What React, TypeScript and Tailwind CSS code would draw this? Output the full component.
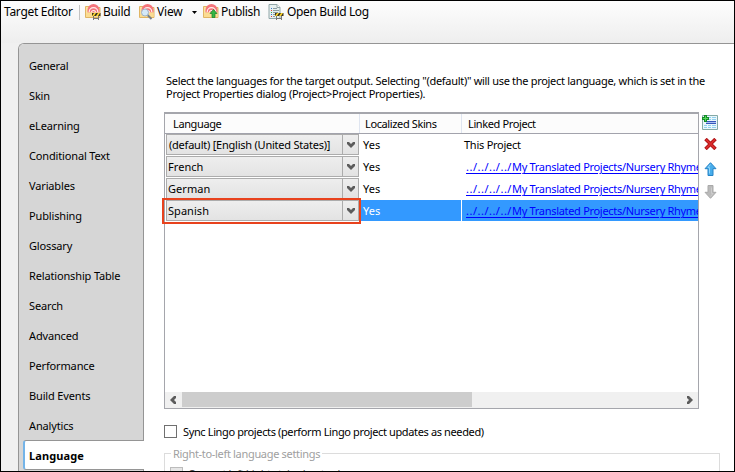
import React from "react";

const navItems = ["General", "Skin", "eLearning", "Conditional Text", "Variables", "Publishing", "Glossary", "Relationship Table", "Search", "Advanced", "Performance", "Build Events", "Analytics"];

const rows = [
  { language: "(default) [English (United States)]", link: false, selected: false },
  { language: "French", link: true, selected: false },
  { language: "German", link: true, selected: false },
  { language: "Spanish", link: true, selected: true },
];

function TargetArt() {
  return (
    <>
      <path d="M.5 2.500h4l1 1h9.500v10H.5z" fill="#fbe3a0" stroke="#e0b564" />
      <path d="M2.500 8.500V6a5.500 5.500 0 0 1 12 0v2.500z" fill="#f4757c" />
      <path d="M4.200 8a4.300 4.300 0 0 1 8.600 0M6.500 8.500a2 2 0 0 1 4 0" fill="none" stroke="#fff0ee" strokeWidth="1.200" />
      <path d="M1 9.500l3-1h10.500v4.500H1z" fill="#fbdc92" />
    </>
  );
}

function Barrier() {
  return (
    <>
      <path d="M8.500 12v4M13.500 12v4M8 14.500h6" stroke="#777" />
      <path d="M7 9h8.500v3H7z" fill="#3a3420" />
      <path d="M7 12l2-3h2l-2 3zM11 12l2-3h2l-2 3z" fill="#fbd42c" />
    </>
  );
}

function BuildIcon() {
  return <svg className="h-4 w-4 shrink-0" viewBox="0 0 16 16"><TargetArt /><Barrier /></svg>;
}

function ViewIcon() {
  return (
    <svg className="h-4 w-4 shrink-0" viewBox="0 0 16 16">
      <TargetArt />
      <path d="M8.500 11l4 4" stroke="#777f89" strokeWidth="2" />
      <circle cx="6" cy="8.500" r="3.500" fill="#d5e9f8" stroke="#9eb4c8" />
    </svg>
  );
}

function PublishIcon() {
  return (
    <svg className="h-4 w-4 shrink-0" viewBox="0 0 16 16">
      <TargetArt />
      <path d="M10.500 5.500L14 9.500h-2v4H9v-4H7z" fill="#35b744" stroke="#16812b" strokeWidth=".7" />
    </svg>
  );
}

function LogIcon() {
  return (
    <svg className="h-4 w-4 shrink-0" viewBox="0 0 16 16">
      <path d="M1 .5h8l3 3v11H1z" fill="#e6f0f0" stroke="#91a6a8" />
      <path d="M9 .5v3h3" fill="#fff" stroke="#91a6a8" />
      <path d="M5 4.500h4M5 6.500h6M5 8.500h5M5 10.500h2M5 12.500h2" stroke="#8b9ca0" />
      <path d="M3 4.500h1M3 10.500h1" stroke="#3676d2" />
      <path d="M3 6.500h1M3 12.500h1" stroke="#e33c38" />
      <path d="M3 8.500h1" stroke="#38a448" />
      <Barrier />
    </svg>
  );
}

function AddRowIcon() {
  return (
    <svg className="h-[15px] w-4" viewBox="0 0 16 15">
      <path d="M.5.5h15v14H.5z" fill="#eaf6fb" stroke="#83a9a5" />
      <path d="M5 2h9v3H5zM2 10h12v3H2z" fill="#8fd0ed" />
      <path d="M2 11.500h12M5.500 10v3M9.500 2v3M9.500 10v3M6 3.500h8" stroke="#e9f8fe" />
      <path d="M4 6.500h10M4 8.500h10" stroke="#3557b9" />
      <path d="M4 7.500h10" stroke="#a9bff3" />
      <path d="M3.500 0v7M0 3.500h7" stroke="#128a27" strokeWidth="3" />
      <path d="M3.500 1v5M1 3.500h5" stroke="#56d75b" />
    </svg>
  );
}

function DeleteIcon() {
  return (
    <svg className="h-3 w-[13px]" viewBox="0 0 13 12">
      <path d="M1.500 1l10 10M11.500 1l-10 10" stroke="#a90e10" strokeWidth="3.500" />
      <path d="M2 1.500l9 9M11 1.500l-9 9" stroke="#d92b2b" strokeWidth="1.800" />
    </svg>
  );
}

function ArrowIcon({ down = false }: { down?: boolean }) {
  return (
    <svg className={down ? "h-[14px] w-[13px] rotate-180" : "h-[14px] w-[13px]"} viewBox="0 0 13 14">
      <path d="M6.500.7l5.500 6H9v6.800H4V6.700H1z" fill={down ? "#bababa" : "#48adeb"} stroke={down ? "#a9a9a9" : "#2683c6"} />
      <path d="M6.500 2.500L4 5.500h1.500v6" fill="none" stroke={down ? "#cdcdcd" : "#91d5fa"} />
    </svg>
  );
}

function Chevron({ className }: { className: string }) {
  return (
    <svg className={className} viewBox="0 0 8 6">
      <path d="M0 0h2l2 2 2-2h2v2L4 6 0 2z" fill="#5c5c5c" />
    </svg>
  );
}

function LanguageSelect({ language }: { language: string }) {
  return (
    <div className="ml-px flex h-[21px] w-[193px] shrink-0 border border-[#acacac] bg-linear-to-b from-[#eeeeee] to-[#e3e3e3]">
      <span className={language.startsWith("(") ? "flex-1 pl-[2px] leading-[19px] tracking-[-0.23px]" : "flex-1 pl-px leading-[19px] tracking-[0.05px]"}>{language}</span>
      <span className="flex w-4 items-center justify-center border-l border-[#acacac]"><Chevron className="h-[6px] w-2" /></span>
    </div>
  );
}

export default function App() {
  return (
    <div className="relative flex h-[472px] w-[735px] flex-col overflow-hidden whitespace-nowrap border border-black bg-[#f0f0f0] font-['Noto_Sans','DejaVu_Sans',sans-serif] text-[11px] text-black">
      <header className="flex h-[42px] shrink-0 items-start bg-linear-to-b from-[#fdfdfd] to-[#eeeeee] text-[12px] leading-[22px]">
        <span className="w-[78px] shrink-0 pl-[3px] tracking-[-0.3px]">Target Editor</span>
        <span className="mt-1 mr-[5px] h-[15px] w-px shrink-0 bg-[#c3c3c3]" />
        <div className="flex w-[54px] items-start gap-[2px] tracking-[-0.3px]"><span className="mt-[3px]"><BuildIcon /></span><span>Build</span></div>
        <div className="flex w-[64px] items-start gap-[2px] tracking-[-0.2px]"><span className="mt-[3px]"><ViewIcon /></span><span>View</span><svg className="mt-[10px] mr-[6px] ml-auto h-[3px] w-[5px]" viewBox="0 0 5 3"><path d="M0 0h5L2.500 3z" /></svg></div>
        <div className="flex w-[65px] items-start gap-[2px] tracking-[-0.35px]"><span className="mt-[3px]"><PublishIcon /></span><span>Publish</span></div>
        <div className="flex items-start gap-[3px] tracking-[-0.37px]"><span className="mt-[3px]"><LogIcon /></span><span>Open Build Log</span></div>
      </header>

      <div className="ml-[17px] flex min-h-0 flex-1 overflow-hidden rounded-tl-[6px] border-t border-l border-[#959595] bg-white">
        <nav className="flex w-[125px] shrink-0 flex-col bg-[#d6d6d6]">
          <div className="h-[396px] shrink-0 border-r border-[#959595] pt-[7px]">
            {navItems.map((item) => <div className="h-[30px] pl-[10px] leading-[30px] tracking-[-0.15px]" key={item}>{item}</div>)}
          </div>
          <div className="ml-1 flex h-[30px] shrink-0 rounded-l-[3px] border-y border-l-2 border-y-[#959595] border-l-[#74b4e8] bg-white pl-1 leading-[29px] font-bold tracking-[0.1px]">Language</div>
          <div className="h-2 border-r border-[#959595]" />
        </nav>

        <main className="flex min-w-0 flex-1 flex-col pl-5">
          <p className="mt-[30px] h-[38px] shrink-0 pl-[2px] leading-[13px]">
            <span className="tracking-[-0.3px]">Select the languages for the target output. Selecting "(default)" will use the project language, which is set in the</span><br />
            <span className="tracking-[-0.27px]">Project Properties dialog (Project&gt;Project Properties).</span>
          </p>

          <div className="flex h-[297px] shrink-0">
            <section className="flex w-[535px] shrink-0 flex-col border border-t-2 border-[#a5a6ac] bg-white">
              <div className="flex h-5 shrink-0 border-b border-[#a2a3ac] bg-[#fcfcfc] leading-[20px] tracking-[-0.38px]">
                <span className="w-[195px] border-r border-[#dfe5f0] pl-2">Language</span>
                <span className="w-[102px] border-r border-[#dfe5f0] pl-[5px]">Localized Skins</span>
                <span className="pl-[6px]">Linked Project</span>
              </div>
              {rows.map((row) => (
                <div className="flex h-[22px] shrink-0 leading-[21px]" key={row.language}>
                  <LanguageSelect language={row.language} />
                  <div className={row.selected ? "ml-px flex h-[21px] min-w-0 flex-1 bg-[#3399ff] text-white" : "ml-px flex h-[21px] min-w-0 flex-1"}>
                    <span className={row.selected ? "w-[102px] shrink-0 border-r border-white pl-[3px]" : "w-[102px] shrink-0 pl-[3px]"}>Yes</span>
                    {row.link
                      ? <a className="min-w-0 overflow-hidden pl-1 text-[#0000ff] underline underline-offset-2"><span className="tracking-[0.5px]">../../../../</span><span className="tracking-[-0.3px]">My Translated Projects/Nursery Rhyme</span></a>
                      : <span className="pl-[2px] tracking-[-0.25px]">This Project</span>}
                  </div>
                </div>
              ))}
              <div className="mt-auto flex h-[16px] shrink-0 items-stretch bg-[#f0f0f0]">
                <span className="flex w-[15px] items-center justify-center"><Chevron className="h-[6px] w-2 rotate-90" /></span>
                <span className="ml-[2px] h-[15px] w-[290px] bg-[#cdcdcd]" />
                <span className="mr-[3px] ml-auto flex w-[10px] items-center justify-center"><Chevron className="h-[6px] w-2 -rotate-90" /></span>
              </div>
            </section>
            <aside className="flex flex-col items-center pt-[3px] pl-[3px]">
              <AddRowIcon />
              <span className="mt-2 h-3"><DeleteIcon /></span>
              <span className="mt-3 h-[14px]"><ArrowIcon /></span>
              <span className="mt-[9px] h-[14px]"><ArrowIcon down /></span>
            </aside>
          </div>

          <label className="mt-4 flex h-[13px] shrink-0 items-center gap-[6px]">
            <span className="h-[13px] w-[13px] border border-[#707070] bg-white" />
            <span className="leading-[13px] tracking-[-0.37px]">Sync Lingo projects (perform Lingo project updates as needed)</span>
          </label>

          <fieldset className="mt-[9px] h-[60px] w-[556px] shrink-0 border border-[#dcdcdc] pl-[5px]">
            <legend className="ml-[1px] px-[2px] leading-[13px] tracking-[-0.32px] text-[#a0a0a0]">Right-to-left language settings</legend>
            <div className="flex items-start gap-[5px] pt-[7px]">
              <span className="h-[13px] w-[13px] border border-[#bcbcbc] bg-[#e6e6e6]" />
              <span className="leading-[13px] tracking-[-0.37px] text-[#505050]">Convert left/right style sheet rules</span>
            </div>
          </fieldset>
        </main>
      </div>
      <div className="absolute top-[197px] left-[161px] h-[26px] w-[199px] border-2 border-[#e8421d]" />
    </div>
  );
}
